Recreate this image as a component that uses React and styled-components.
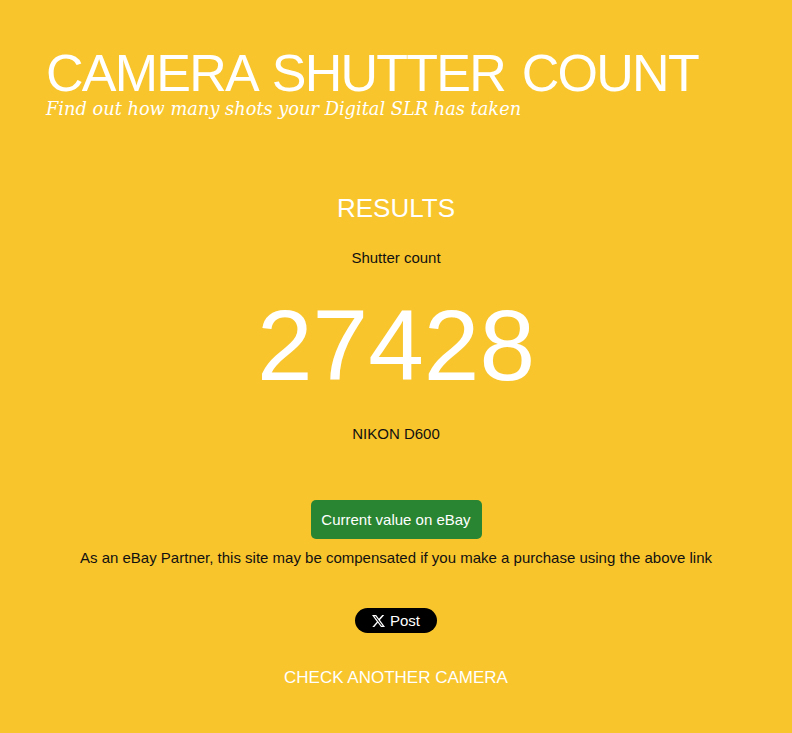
import styled, { createGlobalStyle } from "styled-components";

const GlobalStyle = createGlobalStyle`
  html, body {
    margin: 0;
    padding: 0;
    background: #f9c52c;
  }
  body {
    font-family: "Liberation Sans", Arial, sans-serif;
  }
`;

function XLogo() {
  return (
    <svg width="13" height="12" viewBox="0 0 24 22" fill="white">
      <path d="M18.9 0h3.7l-8 9.2L24 22h-7.4l-5.8-7.6L4.2 22H.5l8.6-9.8L0 0h7.6l5.2 6.9L18.9 0zm-1.3 19.8h2L6.5 2.1H4.3l13.3 17.7z" />
    </svg>
  );
}

function App() {
  return (
    <Pagina>
      <GlobalStyle />
      <Cabecalho>
        <Titulo>CAMERA SHUTTER COUNT</Titulo>
        <Subtitulo>Find out how many shots your Digital SLR has taken</Subtitulo>
      </Cabecalho>
      <Resultados>
        <TituloResultados>RESULTS</TituloResultados>
        <Rotulo>Shutter count</Rotulo>
        <Contagem>27428</Contagem>
        <Rotulo>NIKON D600</Rotulo>
        <BotaoEbay>Current value on eBay</BotaoEbay>
        <Aviso>
          As an eBay Partner, this site may be compensated if you make a purchase using the above link
        </Aviso>
        <BotaoPost>
          <XLogo />
          Post
        </BotaoPost>
        <LinkOutra href="#">CHECK ANOTHER CAMERA</LinkOutra>
      </Resultados>
    </Pagina>
  );
}

export default App;

const Pagina = styled.div`
  min-height: 733px;
  background: #f9c52c;
  display: flex;
  flex-direction: column;
`;

const Cabecalho = styled.header`
  padding: 44px 46px 0;
  color: white;
`;

const Titulo = styled.h1`
  margin: 0;
  font-size: 52px;
  font-weight: normal;
  line-height: 58px;
  letter-spacing: -1.75px;
  word-spacing: 4px;
`;

const Subtitulo = styled.div`
  font-family: "DejaVu Serif", Georgia, serif;
  font-style: italic;
  font-size: 17.8px;
  line-height: 20px;
  margin-top: -3px;
`;

const Resultados = styled.main`
  display: flex;
  flex-direction: column;
  align-items: center;
  padding-top: 74px;
  text-align: center;
`;

const TituloResultados = styled.h2`
  margin: 0;
  font-size: 26px;
  font-weight: normal;
  color: white;
  line-height: 30px;
`;

const Rotulo = styled.div`
  font-size: 15px;
  color: #111;
  margin-top: 26px;
  line-height: 18px;
`;

const Contagem = styled.div`
  font-size: 100px;
  color: white;
  line-height: 100px;
  margin-top: 28px;
  margin-bottom: 4px;
`;

const BotaoEbay = styled.button`
  margin-top: 57px;
  background: #2a8532;
  color: white;
  border: none;
  border-radius: 5px;
  font-family: "Liberation Sans", Arial, sans-serif;
  font-size: 15px;
  width: 171px;
  height: 39px;
  cursor: pointer;
`;

const Aviso = styled.p`
  margin: 10px 0 0;
  font-size: 15px;
  color: #111;
  line-height: 18px;
`;

const BotaoPost = styled.button`
  margin-top: 41px;
  display: flex;
  align-items: center;
  gap: 5px;
  background: #000;
  color: white;
  border: none;
  border-radius: 13px;
  height: 25px;
  padding: 0 17px;
  font-family: "Liberation Sans", Arial, sans-serif;
  font-size: 15px;
  cursor: pointer;
`;

const LinkOutra = styled.a`
  margin-top: 35px;
  font-size: 17px;
  color: white;
  text-decoration: none;
`;
